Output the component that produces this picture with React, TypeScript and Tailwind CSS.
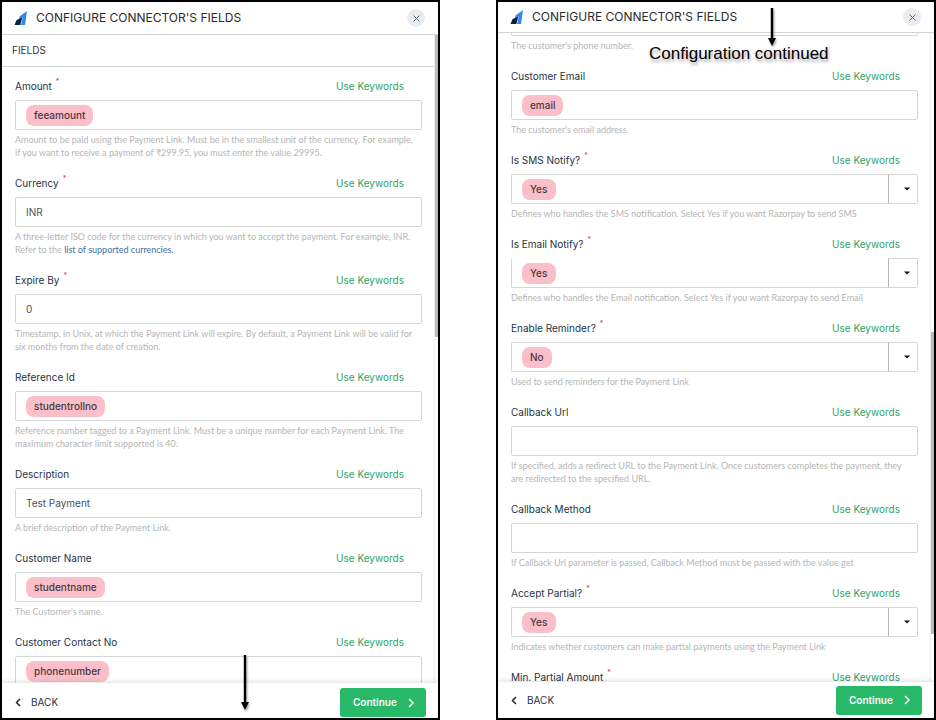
import React, { useId } from "react";

type Field = {
  label: string;
  required?: boolean;
  kind: "chip" | "text" | "select";
  value: string;
  help?: React.ReactNode;
  openTop?: boolean;
};

const firstFields: Field[] = [
  {
    label: "Amount",
    required: true,
    kind: "chip",
    value: "feeamount",
    help: (
      <>
        Amount to be paid using the Payment Link. Must be in the smallest unit of the currency. For example,
        <br />
        if you want to receive a payment of ₹299.95, you must enter the value 29995.
      </>
    ),
  },
  {
    label: "Currency",
    required: true,
    kind: "text",
    value: "INR",
    help: (
      <>
        A three-letter ISO code for the currency in which you want to accept the payment. For example, INR.
        <br />
        Refer to the{" "}
        <a href="#currencies" className="text-[#3f6f9f]">
          list of supported currencies.
        </a>
      </>
    ),
  },
  {
    label: "Expire By",
    required: true,
    kind: "text",
    value: "0",
    help: (
      <>
        Timestamp, in Unix, at which the Payment Link will expire. By default, a Payment Link will be valid for
        <br />
        six months from the date of creation.
      </>
    ),
  },
  {
    label: "Reference Id",
    kind: "chip",
    value: "studentrollno",
    help: (
      <>
        Reference number tagged to a Payment Link. Must be a unique number for each Payment Link. The
        <br />
        maximum character limit supported is 40.
      </>
    ),
  },
  { label: "Description", kind: "text", value: "Test Payment", help: "A brief description of the Payment Link." },
  { label: "Customer Name", kind: "chip", value: "studentname", help: "The Customer's name." },
  { label: "Customer Contact No", kind: "chip", value: "phonenumber" },
];

const moreFields: Field[] = [
  { label: "Customer Email", kind: "chip", value: "email", help: "The customer's email address." },
  {
    label: "Is SMS Notify?",
    required: true,
    kind: "select",
    value: "Yes",
    help: "Defines who handles the SMS notification. Select Yes if you want Razorpay to send SMS",
  },
  {
    label: "Is Email Notify?",
    required: true,
    kind: "select",
    value: "Yes",
    openTop: true,
    help: "Defines who handles the Email notification. Select Yes if you want Razorpay to send Email",
  },
  {
    label: "Enable Reminder?",
    required: true,
    kind: "select",
    value: "No",
    help: "Used to send reminders for the Payment Link",
  },
  {
    label: "Callback Url",
    kind: "text",
    value: "",
    help: (
      <>
        If specified, adds a redirect URL to the Payment Link. Once customers completes the payment, they
        <br />
        are redirected to the specified URL.
      </>
    ),
  },
  {
    label: "Callback Method",
    kind: "text",
    value: "",
    help: "If Callback Url parameter is passed, Callback Method must be passed with the value get",
  },
  {
    label: "Accept Partial?",
    required: true,
    kind: "select",
    value: "Yes",
    help: "Indicates whether customers can make partial payments using the Payment Link",
  },
  { label: "Min. Partial Amount", required: true, kind: "text", value: "" },
];

function Logo() {
  return (
    <svg width="14" height="16" viewBox="0 0 14 16" aria-hidden="true">
      <path d="M13 1 11 15H7L8.800 7.500 4.600 10.200 5.600 6.500Z" fill="#2f87e8" />
      <path d="M2.600 10 0.500 15H6.300L8.300 7.700Z" fill="#0b2142" />
    </svg>
  );
}

function Control({ field, id }: { field: Field; id: string }) {
  if (field.kind === "text") {
    return (
      <input
        id={id}
        defaultValue={field.value}
        className="block h-[30px] w-full rounded-xs border border-[#d6d6d6] px-[10px] text-[10px] text-[#4a4f57] outline-none"
      />
    );
  }
  if (field.kind === "chip") {
    return (
      <div className="flex h-[30px] items-center rounded-xs border border-[#d6d6d6] pl-[10px]">
        <span className="flex h-[21px] items-center rounded-lg bg-[#fbbfca] px-2 text-[10px] font-medium text-[#4a3840]">
          {field.value}
        </span>
        <input id={id} className="h-full min-w-0 flex-1 px-2 text-[10px] outline-none" />
      </div>
    );
  }
  return (
    <div className="flex h-[30px]">
      <div
        className={`flex flex-1 items-center rounded-l-xs border-y border-l border-[#d6d6d6] pl-[10px] ${
          field.openTop ? "border-t-transparent" : ""
        }`}
      >
        <select
          id={id}
          defaultValue={field.value}
          className="h-[21px] appearance-none rounded-lg bg-[#fbbfca] px-2 text-[10px] font-medium text-[#4a3840] outline-none"
        >
          <option>{field.value}</option>
        </select>
      </div>
      <button
        type="button"
        aria-label={`Open ${field.label}`}
        className="flex w-[30px] items-center justify-center rounded-r-xs border border-[#d6d6d6] border-l-[#b4b4b4] pl-2"
      >
        <svg width="6" height="4" viewBox="0 0 6 4" aria-hidden="true">
          <path d="M0 0.500H6L3 3.500Z" fill="#111" />
        </svg>
      </button>
    </div>
  );
}

function HelpText({ children }: { children?: React.ReactNode }) {
  return (
    <p className="mt-[3px] min-h-[13px] font-['Lato',sans-serif] text-[9px] leading-[13px] whitespace-nowrap text-[#b5b5b5]">
      {children}
    </p>
  );
}

function FieldBlock({ field }: { field: Field }) {
  const id = useId();
  return (
    <div className="pb-[15px]">
      <div className="mb-[5px] flex h-[18px] items-center justify-between pr-[18px]">
        <label htmlFor={id} className="flex text-[10px] leading-[18px] text-[#26323f]">
          {field.label}
          {field.required && <span className="ml-1 text-[7px] leading-[10px] text-[#d0454c]">*</span>}
        </label>
        <button type="button" className="text-[10px] leading-[18px] text-[#2fa265]">
          Use Keywords
        </button>
      </div>
      <Control field={field} id={id} />
      <HelpText>{field.help}</HelpText>
    </div>
  );
}

function Panel({ fields, continued = false }: { fields: Field[]; continued?: boolean }) {
  return (
    <section className="flex min-w-0 flex-1 flex-col overflow-hidden border-2 border-black bg-white">
      <header
        className={`flex shrink-0 items-center border-b border-[#d4d4d4] pr-[13px] pl-3 ${
          continued ? "h-[31px]" : "h-[33px]"
        }`}
      >
        <Logo />
        <h1 className="ml-2 flex-1 text-[12px] text-[#2b2b2b]">CONFIGURE CONNECTOR'S FIELDS</h1>
        <button
          type="button"
          aria-label="Close"
          className="flex h-[18px] w-[18px] items-center justify-center rounded-full bg-[#e9edf2]"
        >
          <svg width="7" height="7" viewBox="0 0 7 7" aria-hidden="true">
            <path d="M0.500 0.500 6.500 6.500M6.500 0.500 0.500 6.500" stroke="#5b6673" strokeWidth="1" />
          </svg>
        </button>
      </header>

      <div className="flex min-h-0 flex-1">
        <div className="min-w-0 flex-1 overflow-hidden">
          {!continued && (
            <h2 className="flex h-8 items-center border-b border-[#d4d4d4] pl-[10px] text-[10px] text-[#333]">FIELDS</h2>
          )}
          <div className={`pr-3 pl-[13px] ${continued ? "" : "pt-[10px]"}`}>
            {continued && (
              <div className="pb-[15px]">
                <div className="h-[3px] rounded-b-xs border-x border-b border-[#d6d6d6]" />
                <HelpText>The customer's phone number.</HelpText>
              </div>
            )}
            {fields.map((field) => (
              <FieldBlock key={field.label} field={field} />
            ))}
          </div>
        </div>
        <div className="w-1 shrink-0 border-l border-[#f0f0f0]">
          <div className={`h-[302px] bg-[#b9b9b9] ${continued ? "mt-[299px]" : ""}`} />
        </div>
      </div>

      <footer
        className={`z-10 flex shrink-0 items-center justify-between bg-white pr-3 pl-[13px] shadow-[0_-1px_5px_rgba(0,0,0,0.15)] ${
          continued ? "h-9" : "h-[35px] pt-1"
        }`}
      >
        <button type="button" className="flex items-center gap-[10px] text-[10px] text-[#26323f]">
          <svg width="6" height="9" viewBox="0 0 6 9" fill="none" aria-hidden="true">
            <path d="M5 1 1.500 4.500 5 8" stroke="#1c2733" strokeWidth="1.500" />
          </svg>
          BACK
        </button>
        <button
          type="button"
          className="flex h-[29px] w-[86px] items-center justify-between rounded-[3px] bg-[#28b968] pr-3 pl-[13px] text-[10px] font-semibold text-white"
        >
          Continue
          <svg width="6" height="10" viewBox="0 0 6 10" fill="none" aria-hidden="true">
            <path d="M1 1 5 5 1 9" stroke="white" strokeWidth="1.500" />
          </svg>
        </button>
      </footer>
    </section>
  );
}

function Arrow({ length }: { length: number }) {
  return (
    <svg
      width="10"
      height={length}
      viewBox={`0 0 10 ${length}`}
      aria-hidden="true"
      className="drop-shadow-[1px_2px_1px_rgba(0,0,0,0.35)]"
    >
      <path d={`M5 0V${length - 6}`} stroke="#000" strokeWidth="2.400" />
      <path d={`M1 ${length - 8}H9L5 ${length}Z`} fill="#000" />
    </svg>
  );
}

export default function App() {
  return (
    <main className="flex h-screen gap-14 bg-white font-['Inter',sans-serif]">
      <div className="relative flex min-w-0 flex-1">
        <Panel fields={firstFields} />
        <div className="absolute bottom-[10px] left-[240px] z-20">
          <Arrow length={55} />
        </div>
      </div>
      <div className="relative flex min-w-0 flex-1">
        <Panel fields={moreFields} continued />
        <div className="absolute top-2 left-[271px] z-20">
          <Arrow length={38} />
        </div>
        <p className="absolute top-[43px] left-[153px] z-20 font-['Liberation_Sans',Arial,sans-serif] text-[17px] leading-[22px] whitespace-nowrap text-black [text-shadow:1px_3px_3px_rgba(0,0,0,0.35)]">
          Configuration continued
        </p>
      </div>
    </main>
  );
}
